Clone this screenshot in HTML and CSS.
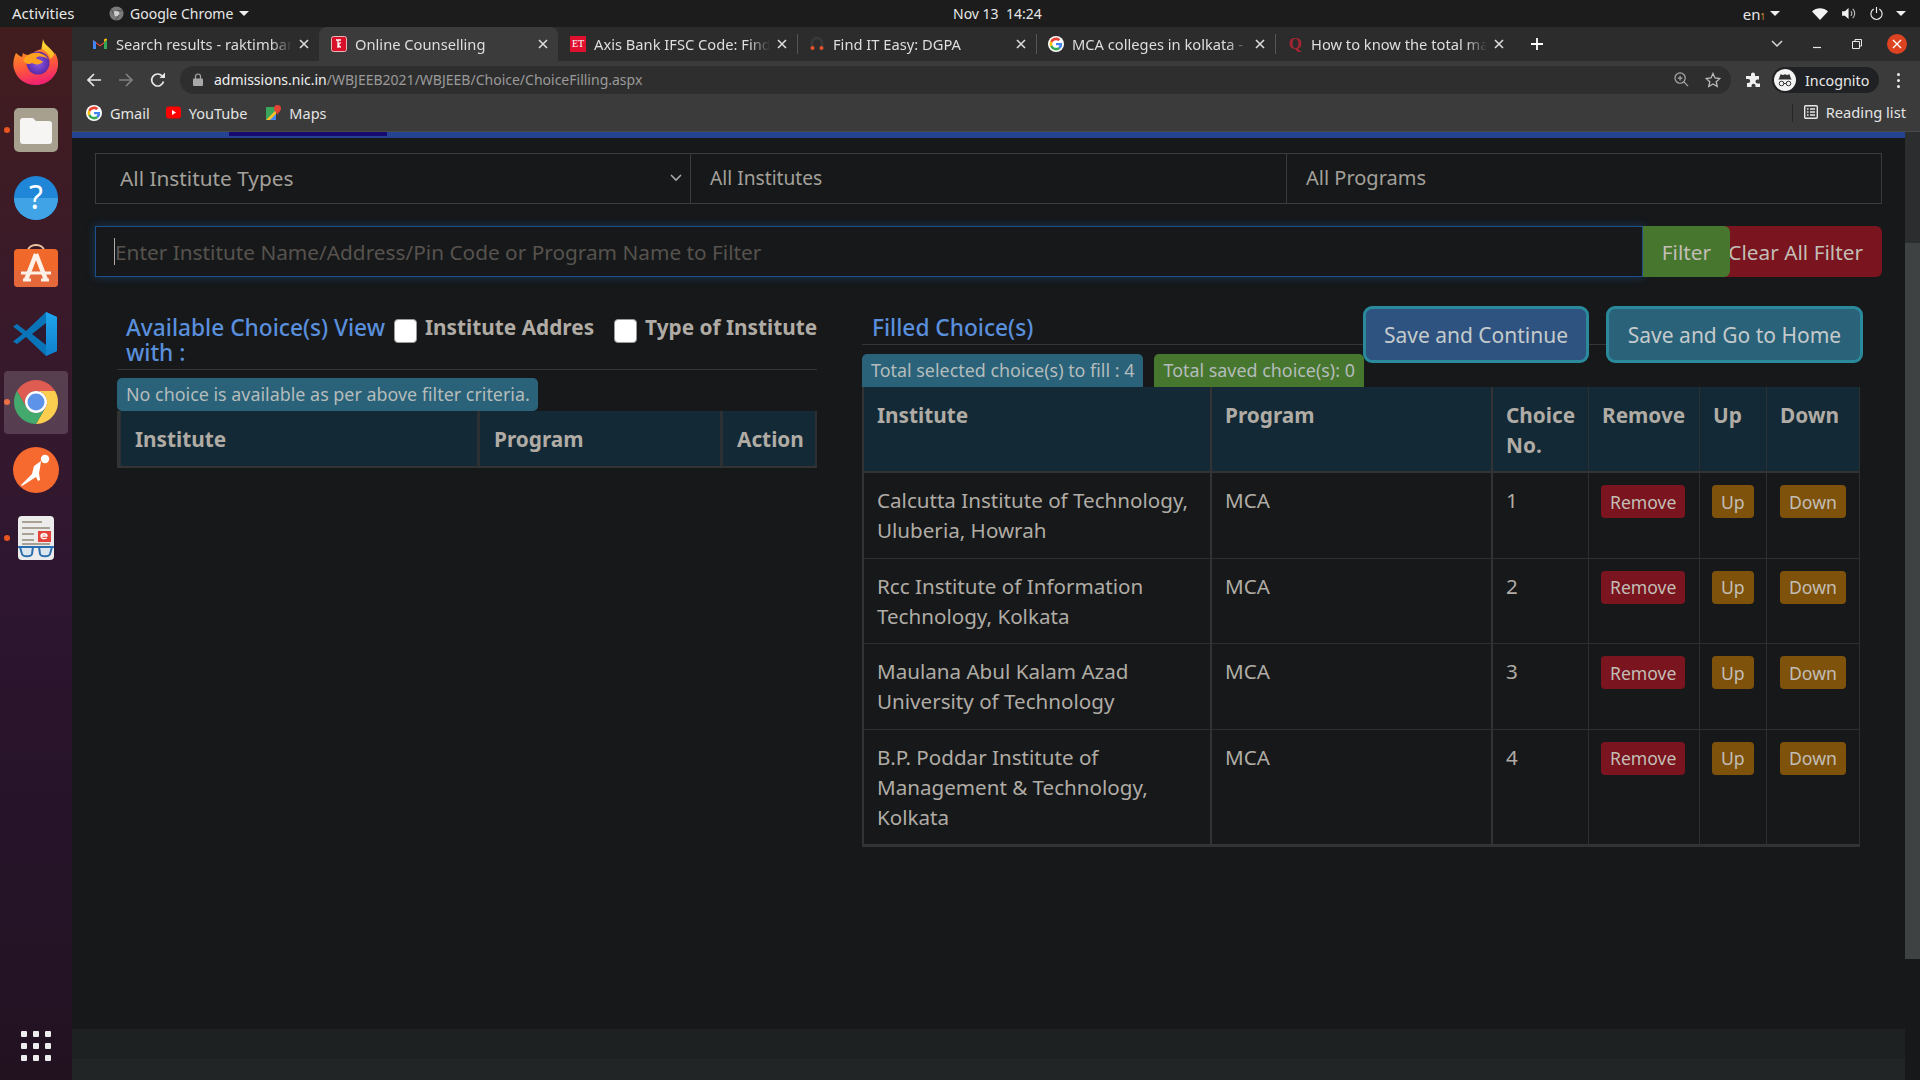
FILE: index.html
```html
<!DOCTYPE html>
<html lang="en">
<head>
  <meta charset="UTF-8">
  <title>Online Counselling</title>
  <link rel="stylesheet" href="styles.css">
</head>
<body>
  <svg class="defs" width="0" height="0">
    <defs>
      <symbol id="g-logo" viewBox="-6 -6 60 60">
        <circle cx="24" cy="24" r="30" fill="#fff"/>
        <path fill="#EA4335" d="M24 9.5c3.54 0 6.71 1.22 9.21 3.6l6.85-6.85C35.9 2.38 30.47 0 24 0 14.62 0 6.51 5.38 2.56 13.22l7.98 6.19C12.43 13.72 17.74 9.5 24 9.5z"/>
        <path fill="#4285F4" d="M46.98 24.55c0-1.57-.15-3.09-.38-4.55H24v9.02h12.94c-.58 2.96-2.26 5.48-4.78 7.18l7.73 6c4.51-4.18 7.09-10.36 7.09-17.65z"/>
        <path fill="#FBBC05" d="M10.53 28.59c-.48-1.45-.76-2.99-.76-4.59s.27-3.14.76-4.59l-7.98-6.19C.92 16.46 0 20.12 0 24c0 3.88.92 7.54 2.56 10.78l7.97-6.19z"/>
        <path fill="#34A853" d="M24 48c6.48 0 11.93-2.13 15.89-5.81l-7.73-6c-2.15 1.45-4.92 2.3-8.16 2.3-6.26 0-11.57-4.22-13.47-9.91l-7.98 6.19C6.51 42.62 14.62 48 24 48z"/>
      </symbol>
      <symbol id="tab-x" viewBox="0 0 12 12">
        <path d="M2 2l8 8M10 2l-8 8" stroke="#dcdcdc" stroke-width="1.6" fill="none"/>
      </symbol>
      <linearGradient id="ff-body" x1="0" y1="0" x2="0.3" y2="1">
        <stop offset="0" stop-color="#ff9a1f"/>
        <stop offset="0.55" stop-color="#ff5a3a"/>
        <stop offset="1" stop-color="#f0246e"/>
      </linearGradient>
      <linearGradient id="ff-flame" x1="0.5" y1="0" x2="0.5" y2="1">
        <stop offset="0" stop-color="#ffe236"/>
        <stop offset="1" stop-color="#ff8a1f"/>
      </linearGradient>
      <radialGradient id="ff-globe">
        <stop offset="0" stop-color="#8b5be8"/>
        <stop offset="1" stop-color="#5b2aa8"/>
      </radialGradient>
      <linearGradient id="vs-blue" x1="0" y1="0" x2="0" y2="1">
        <stop offset="0" stop-color="#20a5ee"/>
        <stop offset="1" stop-color="#0f80cc"/>
      </linearGradient>
    </defs>
  </svg>

  <div class="topbar">
    <span class="activities">Activities</span>
    <span class="app-menu">
      <svg class="app-icon" viewBox="0 0 16 16"><circle cx="8" cy="8" r="7.5" fill="#7a7a7a"/><circle cx="8" cy="8" r="3" fill="#d0d0d0"/><path d="M8 5h6M5.5 9.5L2.5 4M10.5 9.5L7.5 15" stroke="#4d4d4d" stroke-width="1"/></svg>
      Google Chrome
      <i class="tri"></i>
    </span>
    <span class="clock">Nov 13&nbsp;&nbsp;14:24</span>
    <div class="tray">
      <span class="lang">en<small>1</small></span>
      <i class="tri"></i>
      <svg class="tray-wifi" viewBox="0 0 16 12"><path d="M0 3.5C4.5-.8 11.5-.8 16 3.5L8 12z" fill="#f2f2f2"/></svg>
      <svg class="tray-vol" viewBox="0 0 16 14"><path d="M0 4.5h3L7 1v12L3 9.5H0z" fill="#f2f2f2"/><path d="M9.5 4.5a3.5 3.5 0 0 1 0 5M11.5 2a7 7 0 0 1 0 10" stroke="#bdbdbd" stroke-width="1.2" fill="none"/></svg>
      <svg class="tray-power" viewBox="0 0 14 14"><path d="M4 2.2a6 6 0 1 0 6 0M7 0v6.5" stroke="#f2f2f2" stroke-width="1.2" fill="none"/></svg>
      <i class="tri"></i>
    </div>
  </div>

  <div class="desktop">
    <div class="dock">
      <div class="dock-item">
        <svg viewBox="0 0 48 48">
          <path d="M31 1c1 6 7 8 11 14 4 7 5 15 1 21L28 20z" fill="url(#ff-flame)"/>
          <path d="M4 15c-3 6-3 12-2 16 3 10 11 16 22 16 12 0 22-9 22-22 0-3-1-7-3-10-1 3-3 5-5 6-1-5-4-8-8-10-5 1-9 3-11 6-3 0-6 0-8-2l-1 4c-2-1-4-2-6-4z" fill="url(#ff-body)"/>
          <circle cx="26" cy="25" r="11.5" fill="url(#ff-globe)"/>
          <path d="M11 22c4-6 12-9 19-6 3 1 5 3 6 5-5-3-10-3-12-1 2 2 6 2 7 4-3 3-8 3-11 1-3 2-7 1-9-3z" fill="#ffa21f"/>
        </svg>
      </div>
      <div class="dock-item has-dot">
        <svg viewBox="0 0 48 48">
          <rect x="2" y="2" width="44" height="44" rx="5" fill="#a7a08f"/>
          <path d="M8 15a3 3 0 0 1 3-3h10l3 3h13a3 3 0 0 1 3 3v17a3 3 0 0 1-3 3H11a3 3 0 0 1-3-3z" fill="#f6f5f4"/>
        </svg>
      </div>
      <div class="dock-item">
        <svg viewBox="0 0 48 48">
          <circle cx="24" cy="24" r="22" fill="#1f86d8"/>
          <path d="M2 24a22 22 0 0 0 44 0z" fill="#40a3e6"/>
          <text x="24" y="35" text-anchor="middle" class="help-mark">?</text>
        </svg>
      </div>
      <div class="dock-item">
        <svg viewBox="0 0 48 48">
          <path d="M16 9c0-8 16-8 16 0" stroke="#f0c8a0" stroke-width="2" fill="none"/>
          <rect x="2" y="7" width="44" height="38" rx="4" fill="#f0692a"/>
          <path d="M2 28h44v13a4 4 0 0 1-4 4H6a4 4 0 0 1-4-4z" fill="#e4683a"/>
          <path d="M24 12L14 38M24 12l10 26" stroke="#fdf0e6" stroke-width="4.5" fill="none"/>
          <path d="M9 31h30M11 38h8M29 38h8" stroke="#fdf0e6" stroke-width="3"/>
        </svg>
      </div>
      <div class="dock-item">
        <svg viewBox="0 0 48 48">
          <path d="M34 2l11 5v34l-11 5L14 27 5 34l-4-2.5L10.500 24 1 16.500 5 14l9 7z" fill="#0a74b8"/>
          <path d="M34 2l11 5v34l-11 5z" fill="url(#vs-blue)"/>
          <path d="M34 13L20 24l14 11z" fill="#2d1a30"/>
        </svg>
      </div>
      <div class="dock-item has-dot is-active">
        <svg viewBox="0 0 48 48">
          <path d="M4.950 13A22 22 0 0 1 43.050 13H24A11 11 0 0 0 14.470 29.500z" fill="#d93b30"/>
          <path d="M43.050 13A22 22 0 0 1 24 46L33.530 29.500A11 11 0 0 0 24 13z" fill="#fbc52d"/>
          <path d="M24 46A22 22 0 0 1 4.950 13L14.470 29.500A11 11 0 0 0 33.530 29.500z" fill="#1e9850"/>
          <circle cx="24" cy="24" r="11" fill="#fff"/>
          <circle cx="24" cy="24" r="8.500" fill="#3d7fe6"/>
        </svg>
      </div>
      <div class="dock-item">
        <svg viewBox="0 0 48 48">
          <circle cx="24" cy="24" r="23" fill="#f66a30"/>
          <circle cx="33" cy="13" r="4.200" fill="#fff"/>
          <path d="M29 15l-7 5-2 8-11 11 1 1 14-9 2 4 2-1-1-7 1-5z" fill="#fff"/>
        </svg>
      </div>
      <div class="dock-item has-dot">
        <svg viewBox="0 0 48 48">
          <rect x="6" y="2" width="36" height="44" rx="4" fill="#ececec"/>
          <path d="M10 8h20M10 14h28M10 20h12M10 26h12M10 30h28" stroke="#a8a294" stroke-width="2"/>
          <rect x="26" y="17" width="13" height="11" fill="#e2443a"/>
          <path d="M29 22h6c0-3-6-3-6 0s3 3 6 2" stroke="#fff" stroke-width="1.3" fill="none"/>
          <path d="M6 33h36" stroke="#2a6eb0" stroke-width="2"/>
          <path d="M8 33h13l-1 7c-1 3-9 3-10 0zM27 33h13l-2 7c-1 3-9 3-10 0z" fill="#dce6ef" stroke="#2a6eb0" stroke-width="2"/>
        </svg>
      </div>
      <div class="app-grid">
        <i></i><i></i><i></i><i></i><i></i><i></i><i></i><i></i><i></i>
      </div>
    </div>

    <div class="browser">
      <div class="tabstrip">
        <div class="tab">
          <svg class="favicon" viewBox="0 0 16 16"><path d="M1 13V4l7 5 7-5v9h-3V7.500L8 10.500 4 7.500V13z" fill="#ea4335"/><path d="M1 4v9h3V6z" fill="#4285f4"/><path d="M15 4v9h-3V6z" fill="#34a853"/><path d="M12 6l3-2v-1l-1.500-.5L12 3.500z" fill="#fbbc05"/></svg>
          <span class="tab-title">Search results - raktimban</span>
          <svg class="tab-close"><use href="#tab-x"/></svg>
        </div>
        <div class="tab is-current">
          <svg class="favicon" viewBox="0 0 16 16"><rect x="0.500" y="0.500" width="15" height="15" rx="2" fill="#d8102a" stroke="#e8b8b8"/><path d="M5 4h5M7 4v8M10 7c-3-1-3 4 0 4" stroke="#fff" stroke-width="1.300" fill="none"/></svg>
          <span class="tab-title">Online Counselling</span>
          <svg class="tab-close"><use href="#tab-x"/></svg>
        </div>
        <div class="tab">
          <span class="favicon et-icon">ET</span>
          <span class="tab-title">Axis Bank IFSC Code: Find</span>
          <svg class="tab-close"><use href="#tab-x"/></svg>
        </div>
        <div class="tab has-sep">
          <svg class="favicon" viewBox="0 0 16 16"><path d="M3 10V7a5 5 0 0 1 10 0v3" stroke="#3a3a3a" stroke-width="2.500" fill="none"/><circle cx="3.500" cy="12" r="2" fill="#e8542a"/><circle cx="12.500" cy="12" r="2" fill="#e8542a"/></svg>
          <span class="tab-title">Find IT Easy: DGPA</span>
          <svg class="tab-close"><use href="#tab-x"/></svg>
        </div>
        <div class="tab has-sep">
          <svg class="favicon"><use href="#g-logo"/></svg>
          <span class="tab-title">MCA colleges in kolkata - (</span>
          <svg class="tab-close"><use href="#tab-x"/></svg>
        </div>
        <div class="tab has-sep">
          <span class="favicon q-icon">Q</span>
          <span class="tab-title">How to know the total ma</span>
          <svg class="tab-close"><use href="#tab-x"/></svg>
        </div>
        <svg class="new-tab" viewBox="0 0 12 12"><path d="M6 0v12M0 6h12" stroke="#fff" stroke-width="1.800"/></svg>
        <div class="win-controls">
          <span class="win-btn"><svg width="12" height="8" viewBox="0 0 12 8"><path d="M1 1l5 5 5-5" stroke="#d8d8d8" stroke-width="1.500" fill="none"/></svg></span>
          <span class="win-btn"><svg width="10" height="10" viewBox="0 0 10 10"><path d="M1 8.500h8" stroke="#e8e8e8" stroke-width="1.200"/></svg></span>
          <span class="win-btn"><svg width="10" height="10" viewBox="0 0 10 10"><path d="M3 2.500V.500h6.500V7H7.500M.500 2.500H7.500V9.500H.500z" stroke="#e8e8e8" fill="none"/></svg></span>
          <span class="win-btn"><span class="win-close"><svg width="10" height="10" viewBox="0 0 10 10"><path d="M1 1l8 8M9 1l-8 8" stroke="#fff" stroke-width="1.400"/></svg></span></span>
        </div>
      </div>

      <div class="toolbar">
        <span class="nav-btn"><svg width="16" height="16" viewBox="0 0 16 16"><path d="M15 8H2M8 2L2 8l6 6" stroke="#e8e8e8" stroke-width="1.700" fill="none"/></svg></span>
        <span class="nav-btn"><svg width="16" height="16" viewBox="0 0 16 16"><path d="M1 8h13M8 2l6 6-6 6" stroke="#808080" stroke-width="1.700" fill="none"/></svg></span>
        <span class="nav-btn"><svg width="16" height="16" viewBox="0 0 16 16"><path d="M13.500 9.500A6 6 0 1 1 12 3.800" stroke="#e8e8e8" stroke-width="1.700" fill="none"/><path d="M9.500 6H15V.5z" fill="#e8e8e8"/></svg></span>
        <div class="omnibox">
          <svg class="lock" viewBox="0 0 10 13"><path d="M2.500 6V3.500a2.500 2.500 0 0 1 5 0V6" stroke="#a8a8a8" stroke-width="1.200" fill="none"/><rect y="5.500" width="10" height="7.500" rx="1" fill="#a8a8a8"/></svg>
          <span class="url"><b>admissions.nic.in</b>/WBJEEB2021/WBJEEB/Choice/ChoiceFilling.aspx</span>
          <svg class="omni-zoom" viewBox="0 0 16 16"><circle cx="6.500" cy="6.500" r="5.500" stroke="#a8a8a8" stroke-width="1.300" fill="none"/><path d="M10.500 10.500L15 15M6.500 4v5M4 6.500h5" stroke="#a8a8a8" stroke-width="1.300"/></svg>
          <svg class="omni-star" viewBox="0 0 16 16"><path d="M8 1.500l2 4.500 4.800.5-3.600 3.200 1 4.800L8 12l-4.200 2.500 1-4.800L1.200 6.500 6 6z" stroke="#b8b8b8" stroke-width="1.300" fill="none"/></svg>
        </div>
        <svg class="puzzle" viewBox="0 0 16 16"><path d="M6 2.500a2 2 0 0 1 4 0V4h4v3.500h-1.500a2 2 0 0 0 0 4H15V15H10.500v-1.200a2 2 0 0 0-4 0V15H2v-4h1.200a2 2 0 0 0 0-4H1V4h5z" fill="#f0f0f0"/></svg>
        <div class="incognito">
          <svg class="spy" viewBox="0 0 22 22"><circle cx="11" cy="11" r="11" fill="#f4f4f4"/><path d="M4 10.500h14l-1-.8-1.500-4.500-2.500.8-2-.8-2 .8-2.500-.8L5 9.700z" fill="#333"/><circle cx="7.500" cy="14.500" r="2.300" stroke="#333" fill="none"/><circle cx="14.500" cy="14.500" r="2.300" stroke="#333" fill="none"/><path d="M9.800 14.500h2.400" stroke="#333"/></svg>
          <span>Incognito</span>
        </div>
        <span class="kebab"><i></i><i></i><i></i></span>
      </div>

      <div class="bookmarks">
        <span class="bookmark">
          <svg class="bm-g"><use href="#g-logo"/></svg>
          Gmail
        </span>
        <span class="bookmark">
          <svg class="bm-icon" viewBox="0 0 15 12"><rect width="15" height="12" rx="3" fill="#f00"/><path d="M6 3.500L10 6 6 8.500z" fill="#fff"/></svg>
          YouTube
        </span>
        <span class="bookmark bm-maps">
          <svg class="bm-icon" viewBox="0 0 15 15"><path d="M0 2h10v13H0z" fill="#3ba55c"/><path d="M0 15L10 5v10z" fill="#fbc02d"/><path d="M4 15l6-6v6z" fill="#4285f4"/><path d="M11.500 0a3.500 3.500 0 0 1 3.500 3.500C15 6 12.500 7 11.500 10 10.500 7 8 6 8 3.500A3.500 3.500 0 0 1 11.500 0z" fill="#e54335"/></svg>
          Maps
        </span>
        <span class="reading-list">
          <svg class="rl-icon" viewBox="0 0 14 14"><rect x="0.700" y="0.700" width="12.600" height="12.600" rx="1" stroke="#e8e8e8" stroke-width="1.400" fill="none"/><path d="M3 4h1.500M6 4h5M3 7h1.500M6 7h5M3 10h1.500M6 10h5" stroke="#e8e8e8" stroke-width="1.300"/></svg>
          Reading list
        </span>
      </div>

      <div class="viewport">
        <div class="page">
          <div class="site-nav"><span class="site-nav-active"></span></div>

          <div class="content">
            <div class="filters">
              <div class="filter-box filter-select">
                All Institute Types
                <svg class="chevron" width="12" height="8" viewBox="0 0 12 8"><path d="M1 1l5 5 5-5" stroke="#aaa" stroke-width="1.600" fill="none"/></svg>
              </div>
              <div class="filter-box filter-inst">All Institutes</div>
              <div class="filter-box filter-last">All Programs</div>
            </div>

            <div class="search-row">
              <div class="search-box">
                <span class="caret"></span>
                <input type="text" placeholder="Enter Institute Name/Address/Pin Code or Program Name to Filter">
              </div>
              <button class="btn-filter">Filter</button>
              <button class="btn-clear">Clear All Filter</button>
            </div>

            <div class="panels">
              <section class="panel-left">
                <div class="left-head">
                  <h2 class="panel-title left-title">Available Choice(s) View with :</h2>
                  <label class="view-opt"><input type="checkbox"> Institute Addres</label>
                  <label class="view-opt opt-type"><input type="checkbox"> Type of Institute</label>
                </div>
                <div class="note note-left">No choice is available as per above filter criteria.</div>
                <table class="grid grid-left">
                  <colgroup><col class="c-avail-1"><col class="c-avail-2"><col class="c-avail-3"></colgroup>
                  <thead>
                    <tr><th>Institute</th><th>Program</th><th>Action</th></tr>
                  </thead>
                </table>
              </section>

              <section class="panel-right">
                <div class="right-head">
                  <h2 class="panel-title">Filled Choice(s)</h2>
                  <div class="save-btns">
                    <button class="btn-save">Save and Continue</button>
                    <button class="btn-save btn-home">Save and Go to Home</button>
                  </div>
                </div>
                <div class="notes">
                  <div class="note">Total selected choice(s) to fill : 4</div>
                  <div class="note note-green">Total saved choice(s): 0</div>
                </div>
                <table class="grid grid-right">
                  <colgroup><col class="c-1"><col class="c-2"><col class="c-3"><col class="c-4"><col class="c-5"><col class="c-6"></colgroup>
                  <thead>
                    <tr><th>Institute</th><th>Program</th><th>Choice No.</th><th>Remove</th><th>Up</th><th>Down</th></tr>
                  </thead>
                  <tbody>
                    <tr>
                      <td>Calcutta Institute of Technology, Uluberia, Howrah</td><td>MCA</td><td>1</td>
                      <td><button class="mini mini-red">Remove</button></td>
                      <td><button class="mini mini-amber">Up</button></td>
                      <td><button class="mini mini-amber">Down</button></td>
                    </tr>
                    <tr>
                      <td>Rcc Institute of Information Technology, Kolkata</td><td>MCA</td><td>2</td>
                      <td><button class="mini mini-red">Remove</button></td>
                      <td><button class="mini mini-amber">Up</button></td>
                      <td><button class="mini mini-amber">Down</button></td>
                    </tr>
                    <tr>
                      <td>Maulana Abul Kalam Azad University of Technology</td><td>MCA</td><td>3</td>
                      <td><button class="mini mini-red">Remove</button></td>
                      <td><button class="mini mini-amber">Up</button></td>
                      <td><button class="mini mini-amber">Down</button></td>
                    </tr>
                    <tr>
                      <td>B.P. Poddar Institute of Management &amp; Technology, Kolkata</td><td>MCA</td><td>4</td>
                      <td><button class="mini mini-red">Remove</button></td>
                      <td><button class="mini mini-amber">Up</button></td>
                      <td><button class="mini mini-amber">Down</button></td>
                    </tr>
                  </tbody>
                </table>
              </section>
            </div>
          </div>

          <div class="footer"></div>
        </div>
        <div class="scrollbar"><div class="scroll-track"></div><div class="scroll-thumb"></div></div>
      </div>
    </div>
  </div>
</body>
</html>
```

FILE: styles.css
```css
* {
  box-sizing: border-box;
}
body {
  margin: 0;
  height: 100vh;
  display: flex;
  flex-direction: column;
  overflow: hidden;
  background: #16181a;
  font-family: "Noto Sans", sans-serif;
  color: #b0aca5;
}
.defs {
  position: absolute;
}

/* gnome top bar */
.topbar {
  height: 27px;
  flex: none;
  display: flex;
  align-items: center;
  background: #1c1c1c;
  color: #e8e8e8;
  font-size: 14px;
  padding-left: 12px;
  position: relative;
}
.activities {
  width: 97px;
  font-size: 15px;
  padding-bottom: 1px;
}
.app-menu {
  display: flex;
  align-items: center;
  gap: 6px;
}
.app-icon {
  width: 15px;
  height: 15px;
}
.tri {
  display: inline-block;
  width: 0;
  height: 0;
  border-left: 5px solid transparent;
  border-right: 5px solid transparent;
  border-top: 5px solid #eee;
}
.clock {
  position: absolute;
  left: 953px;
}
.tray {
  margin-left: auto;
  display: flex;
  align-items: center;
  padding-right: 14px;
}
.lang {
  font-size: 15px;
  margin-right: 5px;
}
.lang small {
  font-size: 8px;
  color: #e8a040;
}
.tray-wifi {
  width: 16px;
  height: 12px;
  margin-left: 32px;
}
.tray-vol {
  width: 15px;
  height: 13px;
  margin-left: 14px;
}
.tray-power {
  width: 13px;
  height: 13px;
  margin-left: 13px;
  margin-right: 13px;
}

.desktop {
  flex: 1;
  display: flex;
  min-height: 0;
}

/* dock */
.dock {
  width: 72px;
  flex: none;
  display: flex;
  flex-direction: column;
  padding-top: 1px;
  background: linear-gradient(180deg, #421d1e 0%, #3a1a2a 25%, #2f1630 50%, #26132a 75%, #221220 100%);
}
.dock-item {
  height: 68px;
  flex: none;
  display: flex;
  align-items: center;
  justify-content: center;
  position: relative;
}
.dock-item svg {
  width: 48px;
  height: 48px;
}
.has-dot::before {
  content: "";
  position: absolute;
  left: 4px;
  top: 31px;
  width: 6px;
  height: 6px;
  border-radius: 50%;
  background: #e95420;
}
.is-active::after {
  content: "";
  position: absolute;
  left: 4px;
  right: 4px;
  top: 3px;
  bottom: 2px;
  border-radius: 4px;
  background: rgba(255, 255, 255, 0.17);
}
.help-mark {
  font-family: "Noto Sans", sans-serif;
  font-size: 32px;
  fill: #fff;
}
.app-grid {
  margin-top: auto;
  margin-bottom: 19px;
  margin-left: 21px;
  width: 30px;
  display: grid;
  grid-template-columns: repeat(3, 6px);
  gap: 6px;
}
.app-grid i {
  height: 6px;
  background: #eee;
  border-radius: 1px;
}

/* chrome */
.browser {
  flex: 1;
  min-width: 0;
  display: flex;
  flex-direction: column;
}
.tabstrip {
  height: 34px;
  flex: none;
  display: flex;
  align-items: center;
  padding-left: 8px;
  background: #2c2c2c;
}
.tab {
  width: 239px;
  height: 34px;
  flex: none;
  display: flex;
  align-items: center;
  padding: 0 9px 1px 12px;
  color: #dedede;
  font-size: 14.700px;
  position: relative;
}
.tab.is-current {
  background: #3b3b3b;
  border-radius: 8px 8px 0 0;
}
.has-sep::before {
  content: "";
  position: absolute;
  left: 0;
  top: 7px;
  height: 20px;
  border-left: 1px solid #555;
}
.favicon {
  width: 16px;
  height: 16px;
  flex: none;
  margin-right: 8px;
}
.et-icon {
  background: #e0102f;
  color: #fff;
  font-family: "Liberation Serif", serif;
  font-size: 10px;
  line-height: 16px;
  text-align: center;
}
.q-icon {
  color: #a82433;
  font-family: "Liberation Serif", serif;
  font-weight: bold;
  font-size: 17px;
  line-height: 16px;
  text-align: center;
}
.tab-title {
  flex: 1;
  min-width: 0;
  white-space: nowrap;
  -webkit-mask-image: linear-gradient(90deg, #000 88%, transparent 100%);
  mask-image: linear-gradient(90deg, #000 88%, transparent 100%);
}
.tab-close {
  width: 12px;
  height: 12px;
  flex: none;
  margin-left: 6px;
}
.new-tab {
  width: 12px;
  height: 12px;
  margin-left: 17px;
}
.new-tab + .win-controls {
  margin-left: auto;
}
.win-controls {
  display: flex;
  padding-right: 3px;
}
.win-btn {
  width: 40px;
  height: 24px;
  display: flex;
  align-items: center;
  justify-content: center;
}
.win-close {
  width: 20px;
  height: 20px;
  border-radius: 50%;
  background: #de4321;
  display: flex;
  align-items: center;
  justify-content: center;
}

.toolbar {
  height: 33px;
  flex: none;
  display: flex;
  align-items: center;
  padding: 5px 0 0 6px;
  background: #3b3b3b;
}
.nav-btn {
  width: 32px;
  display: flex;
  justify-content: center;
}
.omnibox {
  flex: 1;
  height: 28px;
  margin-left: 6px;
  display: flex;
  align-items: center;
  padding: 0 10px 1px 13px;
  border-radius: 14px;
  background: #2e2e2e;
  font-size: 14px;
}
.lock {
  width: 10px;
  height: 13px;
  margin-right: 11px;
}
.url {
  color: #9a9a9a;
}
.url b {
  color: #efefef;
  font-weight: normal;
}
.omni-zoom {
  width: 15px;
  height: 15px;
  margin-left: auto;
  margin-right: 16px;
}
.omni-star {
  width: 16px;
  height: 16px;
}
.puzzle {
  width: 16px;
  height: 16px;
  margin: 0 8px 0 14px;
}
.incognito {
  width: 107px;
  height: 26px;
  margin-left: 3px;
  padding-left: 2px;
  display: flex;
  align-items: center;
  gap: 9px;
  border-radius: 13px;
  background: #202124;
  color: #e8e8e8;
  font-size: 14.300px;
}
.spy {
  width: 22px;
  height: 22px;
}
.kebab {
  width: 41px;
  padding-right: 2px;
  display: flex;
  flex-direction: column;
  align-items: center;
  gap: 3px;
}
.kebab i {
  width: 3px;
  height: 3px;
  border-radius: 50%;
  background: #eee;
}

.bookmarks {
  height: 37px;
  flex: none;
  display: flex;
  align-items: center;
  padding-left: 14px;
  background: #3b3b3b;
  color: #e4e4e4;
  font-size: 14.500px;
}
.bookmark {
  display: flex;
  align-items: center;
  gap: 8px;
  margin-right: 16px;
}
.bm-maps {
  margin-left: 3px;
}
.bm-g {
  width: 16px;
  height: 16px;
}
.bm-icon {
  width: 15px;
  height: 15px;
}
.reading-list {
  margin-left: auto;
  height: 18px;
  display: flex;
  align-items: center;
  gap: 8px;
  padding: 0 14px 1px 11px;
  border-left: 1px solid #262626;
  font-size: 14.700px;
}
.rl-icon {
  width: 14px;
  height: 14px;
}

/* the page */
.viewport {
  flex: 1;
  min-height: 0;
  display: flex;
  border-top: 1px solid #4a4a4a;
}
.page {
  flex: 1;
  min-width: 0;
  display: flex;
  flex-direction: column;
}
.site-nav {
  height: 6px;
  flex: none;
  background: #254390;
  padding-left: 157px;
}
.site-nav-active {
  display: block;
  width: 158px;
  height: 4px;
  background: #170a6e;
}
.content {
  flex: 1;
  padding: 15px 23px 0;
}
.footer {
  height: 51px;
  flex: none;
  background: linear-gradient(180deg, #1e2122 0 30px, #212526 30px);
}
.scrollbar {
  width: 15px;
  flex: none;
  display: flex;
  flex-direction: column;
  background: #16181a;
}
.scroll-track {
  height: 111px;
  background: #2b2d2e;
}
.scroll-thumb {
  height: 716px;
  background: #3f4243;
}

.filters {
  height: 51px;
  display: grid;
  grid-template-columns: 595px 596px 596px;
  font-size: 20px;
  color: #a3a09a;
}
.filter-box {
  display: flex;
  align-items: center;
  padding: 0 0 2px 19px;
  border: 1px solid #3a3c3e;
  border-right: 0;
}
.filter-select {
  padding-left: 24px;
  font-size: 20.800px;
}
.filter-inst {
  font-size: 19.200px;
}
.filter-last {
  border-right: 1px solid #3a3c3e;
}
.chevron {
  margin-left: auto;
  margin-right: 8px;
}

.search-row {
  height: 51px;
  margin-top: 22px;
  display: flex;
}
.search-box {
  flex: 1;
  display: flex;
  align-items: center;
  padding-left: 18px;
  border: 1px solid #1d4f8c;
  box-shadow: 0 0 8px 1px rgba(29, 79, 140, 0.45);
}
.caret {
  width: 1px;
  height: 27px;
  flex: none;
  background: #b0aca5;
}
.search-box input {
  flex: 1;
  height: 40px;
  padding: 0;
  border: 0;
  outline: none;
  background: transparent;
  font: 20.800px "Noto Sans", sans-serif;
  color: #b0aca5;
}
.search-box input::placeholder {
  color: #56534e;
}
.btn-filter,
.btn-clear {
  height: 51px;
  border: 0;
  font: 20.800px "Noto Sans", sans-serif;
  color: #c2beb6;
}
.btn-filter {
  width: 87px;
  position: relative;
  z-index: 1;
  background: #47762e;
  border-radius: 0 6px 6px 0;
}
.btn-clear {
  width: 169px;
  margin-left: -17px;
  padding: 0 19px 0 0;
  text-align: right;
  white-space: nowrap;
  background: #7a141e;
  border-radius: 0 6px 6px 0;
}

.panels {
  margin-top: 29px;
  display: flex;
  margin-left: 22px;
}
.panel-left {
  width: 700px;
  flex: none;
}
.panel-right {
  width: 998px;
  flex: none;
  margin-left: 45px;
}
.panel-title {
  margin: 0;
  font-size: 22.700px;
  line-height: 25px;
  font-weight: 500;
  color: #5a8fdc;
}
.left-head {
  height: 64px;
  display: flex;
  padding: 9px 0 0 9px;
  border-bottom: 1px solid #333537;
}
.left-title {
  width: 268px;
  flex: none;
}
.view-opt {
  display: flex;
  align-items: flex-start;
  gap: 8px;
  height: 25px;
  font-size: 20.800px;
  line-height: 24px;
  font-weight: bold;
  color: #b0aca5;
  white-space: nowrap;
}
.view-opt input {
  appearance: none;
  width: 23px;
  height: 24px;
  margin: 4px 0 0;
  border-radius: 4px;
  background: #fff;
  border: 1px solid #999;
}
.opt-type {
  margin-left: 20px;
}
.note {
  display: inline-block;
  height: 33px;
  padding: 0 9px;
  font-size: 17.900px;
  line-height: 33px;
  white-space: nowrap;
  background: #2a6279;
  border-radius: 5px 5px 0 0;
  color: #b4bcbc;
}
.note-left {
  display: block;
  width: 421px;
  margin-top: 8px;
  border-radius: 5px;
}
.notes {
  display: flex;
  gap: 11px;
  margin-top: 9px;
}
.note-green {
  background: #47762e;
}
.right-head {
  height: 39px;
  display: flex;
  justify-content: space-between;
  padding-left: 10px;
  border-bottom: 1px solid #333537;
}
.right-head .panel-title {
  margin-top: 9px;
}
.save-btns {
  display: flex;
  gap: 17px;
  margin-right: -3px;
}
.btn-save {
  height: 57px;
  padding: 0;
  width: 226px;
  border: 3px solid #2a8a9c;
  border-radius: 9px;
  background: #2f5380;
  font: 21px "Noto Sans", sans-serif;
  color: #c4cacc;
}
.btn-home {
  width: 257px;
  background: #2a6279;
}

/* tables */
.grid {
  width: 100%;
  table-layout: fixed;
  border-collapse: separate;
  border-spacing: 0;
  font-size: 20.600px;
  line-height: 30px;
}
.grid th,
.grid td {
  padding: 12.250px 12px 12.250px 13px;
  text-align: left;
  vertical-align: top;
  border-right: 1px solid #2d3032;
  border-bottom: 1px solid #2d3032;
}
.grid th {
  padding-top: 13px;
  padding-bottom: 11px;
  background: #132936;
  font-size: 20.800px;
  font-weight: bold;
  color: #b0aca5;
  border-bottom: 2px solid #333;
}
.grid td:nth-child(n+4) {
  padding-left: 12px;
  padding-right: 0;
}
.grid td:last-child {
  padding-left: 13px;
}
.grid-right {
  border-left: 2px solid #333;
  border-bottom: 1px solid #333;
}
.grid-right th:nth-child(-n+2),
.grid-right td:nth-child(-n+2) {
  border-right: 2px solid #333;
}
.grid-right tbody tr:last-child td {
  border-bottom: 2px solid #333;
}
.grid-left {
  border-left: 3px solid #333;
  border-bottom: 2px solid #333;
}
.grid-left th {
  border-left: 1px solid #2d3032;
  border-right: 2px solid #2d3032;
  border-bottom: 0;
  padding: 13px 10px 10px 14px;
  height: 55px;
}
.c-avail-1 { width: 359px; }
.c-avail-2 { width: 243px; }
.c-avail-3 { width: 95px; }
.c-1 { width: 348px; }
.c-2 { width: 281px; }
.c-3 { width: 96px; }
.c-4 { width: 111px; }
.c-5 { width: 67px; }
.c-6 { width: 93px; }

.mini {
  display: block;
  height: 33px;
  padding: 0 8px;
  border: 1px solid transparent;
  border-radius: 4px;
  font: 17.600px "Noto Sans", sans-serif;
  color: #c2beb6;
}
.mini-red {
  background: #7a141e;
}
.mini-amber {
  background: #7f520c;
}
```
